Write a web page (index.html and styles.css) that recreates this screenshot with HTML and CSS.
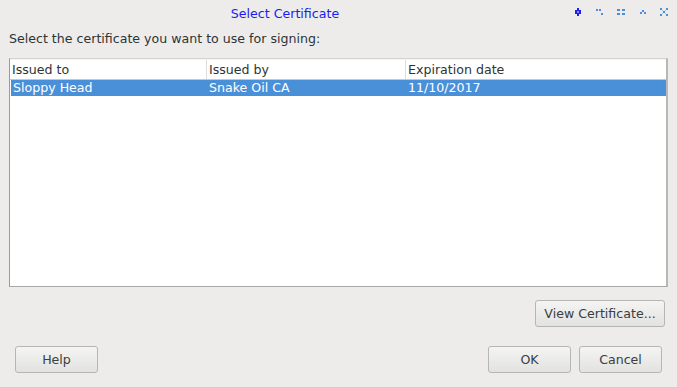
FILE: index.html
```html
<!DOCTYPE html>
<html>
<head>
  <title>Select Certificate</title>
  <link rel="stylesheet" href="styles.css">
</head>
<body>
  <div class="window">
    <div class="titlebar">
      <div class="title">Select Certificate</div>
      <div class="title-buttons">
        <svg width="8" height="8" viewBox="0 0 8 8"><g fill="#1f1ff2"><rect x="3" y="0" width="2" height="2"/><rect x="1" y="2" width="6" height="4"/><rect x="3" y="6" width="2" height="2"/></g><rect x="3" y="3" width="2" height="2" fill="#8a8aff"/></svg>
        <svg width="8" height="8" viewBox="0 0 8 8"><g fill="#4a90d9"><rect x="0" y="1" width="2" height="2"/><rect x="3" y="1" width="2" height="2"/><rect x="5" y="5" width="2" height="2"/></g></svg>
        <svg width="8" height="8" viewBox="0 0 8 8"><g fill="#4a90d9"><rect x="0" y="1" width="3" height="2"/><rect x="5" y="1" width="3" height="2"/><rect x="0" y="5" width="3" height="2"/><rect x="5" y="5" width="3" height="2"/></g></svg>
        <svg width="8" height="8" viewBox="0 0 8 8"><g fill="#4a90d9"><rect x="3" y="2" width="2" height="2"/><rect x="1" y="4" width="2" height="2"/><rect x="5" y="4" width="2" height="2"/></g></svg>
        <svg width="8" height="8" viewBox="0 0 8 8"><g fill="#4a90d9"><rect x="0" y="0" width="2" height="2"/><rect x="6" y="0" width="2" height="2"/><rect x="3" y="3" width="2" height="2"/><rect x="0" y="6" width="2" height="2"/><rect x="6" y="6" width="2" height="2"/></g><g fill="#9cc3ec"><rect x="2" y="2" width="1" height="1"/><rect x="5" y="2" width="1" height="1"/><rect x="2" y="5" width="1" height="1"/><rect x="5" y="5" width="1" height="1"/></g></svg>
      </div>
    </div>
    <div class="content">
      <p class="prompt">Select the certificate you want to use for signing:</p>
      <div class="list">
        <div class="list-head">
          <div class="col col-to">Issued to</div>
          <div class="col col-by">Issued by</div>
          <div class="col col-exp">Expiration date</div>
        </div>
        <div class="list-row selected">
          <div class="col col-to">Sloppy Head</div>
          <div class="col col-by">Snake Oil CA</div>
          <div class="col col-exp">11/10/2017</div>
        </div>
      </div>
      <div class="view-row">
        <button class="btn btn-view">View Certificate...</button>
      </div>
      <div class="button-row">
        <button class="btn">Help</button>
        <div class="right-buttons">
          <button class="btn">OK</button>
          <button class="btn">Cancel</button>
        </div>
      </div>
    </div>
  </div>
</body>
</html>
```

FILE: styles.css
```css
html, body {
  margin: 0;
  padding: 0;
}

body {
  font-family: "DejaVu Sans", sans-serif;
  font-size: 12.6px;
  color: #2e3436;
  background: #edeceb;
}

.window {
  width: 677px;
  height: 387px;
  border-right: 1px solid #d6d6d4;
  border-bottom: 1px solid #cfcfcd;
  background: #edeceb;
}

.titlebar {
  height: 26px;
  display: flex;
  align-items: center;
}

.title {
  width: 570px;
  text-align: center;
  color: #1c1cf0;
  font-size: 12.6px;
}

.title-buttons {
  display: flex;
  gap: 13.5px;
  margin-left: 4px;
  margin-top: -3px;
}

.title-buttons svg {
  display: block;
}

.content {
  padding: 0 9px;
}

.prompt {
  margin: 5px 0 11px 0;
  line-height: 16px;
}

.list {
  box-sizing: border-box;
  width: 659px;
  height: 229px;
  background: #fff;
  border-top: 1px solid #d4d4d2;
  border-left: 1px solid #9a9a98;
  border-bottom: 1px solid #a8a8a6;
  border-right: 2px solid #b8b8b6;
}

.list-head {
  display: flex;
  box-sizing: border-box;
  height: 21px;
  border-bottom: 1px solid #c8c8c6;
  border-top: 1px solid #f4f4f4;
}

.list-head .col {
  line-height: 19px;
  border-right: 1px solid #dcdcdb;
}

.list-head .col-exp {
  border-right: none;
}

.list-row {
  display: flex;
  height: 16px;
  margin-left: 1px;
}

.list-row .col {
  line-height: 16px;
}

.selected {
  background: #4a90d9;
  color: #fff;
}

.col {
  box-sizing: border-box;
  padding-left: 2px;
  white-space: nowrap;
}

.col-to {
  width: 197px;
}

.col-by {
  width: 199px;
}

.col-exp {
  flex: 1;
}

.list-row .col-to {
  width: 196px;
}

.view-row {
  display: flex;
  justify-content: flex-end;
  margin-top: 13px;
  padding-right: 3px;
}

.btn {
  font-family: "DejaVu Sans", sans-serif;
  font-size: 12.6px;
  color: #3a3f41;
  height: 27px;
  width: 83px;
  border: 1px solid #b6b6b3;
  border-radius: 3px;
  background: linear-gradient(#f4f4f3, #e2e2e0);
  padding: 0;
}

.btn-view {
  width: 130px;
}

.button-row {
  display: flex;
  justify-content: space-between;
  margin-top: 19px;
  padding: 0 6px;
}

.right-buttons {
  display: flex;
  gap: 8px;
}
```
